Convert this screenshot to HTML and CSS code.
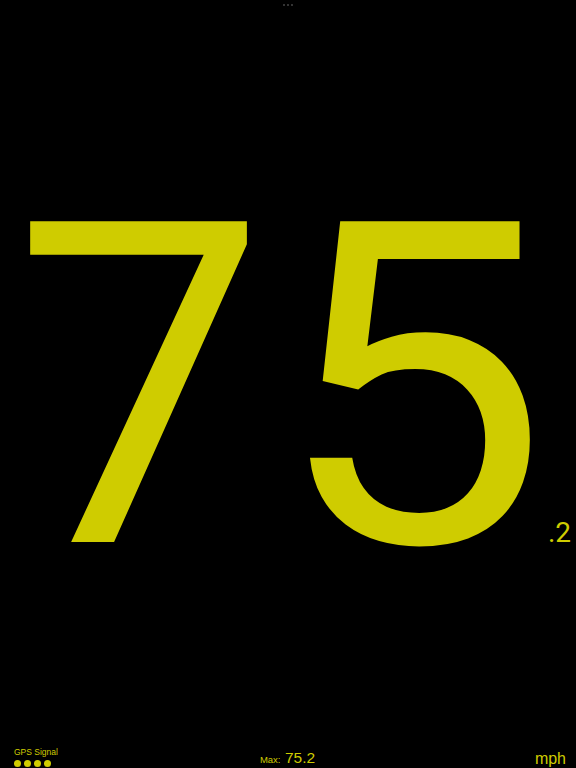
FILE: index.html
```html
<!DOCTYPE html>
<html>
<head>
<meta charset="utf-8">
<link rel="stylesheet" href="styles.css">
</head>
<body>
<div class="screen">
  <div class="grabber"><span></span><span></span><span></span></div>
  <div class="speed">
    <span class="whole"><span class="d7">7</span><span class="d5">5</span></span><span class="frac">.2</span>
  </div>
  <div class="bottom">
    <div class="gps">
      <div class="gps-label">GPS Signal</div>
      <div class="dots"><span></span><span></span><span></span><span></span></div>
    </div>
    <div class="max"><span class="max-label">Max:</span> <span class="max-val">75.2</span></div>
    <div class="unit">mph</div>
  </div>
</div>
</body>
</html>
```
FILE: styles.css
```css
html, body {
  margin: 0;
  padding: 0;
  background: #000;
}
.screen {
  width: 576px;
  height: 768px;
  display: flex;
  flex-direction: column;
  font-family: "Liberation Sans", Arial, sans-serif;
  color: #cfcc00;
  overflow: hidden;
}
.grabber {
  display: flex;
  justify-content: center;
  gap: 2px;
  padding-top: 4px;
  height: 4px;
}
.grabber span {
  width: 2px;
  height: 2px;
  border-radius: 50%;
  background: #444;
}
.speed {
  flex: 1;
  display: flex;
  align-items: baseline;
  justify-content: flex-start;
  padding-top: 155px;
  padding-left: 13px;
}
.whole {
  font-family: Roboto, "Liberation Sans", sans-serif;
  font-weight: 400;
  font-size: 451px;
  line-height: 1;
  white-space: nowrap;
}
.d7 {
  display: inline-block;
}
.d5 {
  display: inline-block;
  margin-left: 7px;
  transform: scaleX(1.09);
  transform-origin: 0 50%;
}
.frac {
  font-family: Roboto, "Liberation Sans", sans-serif;
  font-size: 28px;
  line-height: 1;
  margin-left: 21px;
}
.bottom {
  display: grid;
  grid-template-columns: 1fr auto 1fr;
  align-items: end;
  padding: 0 10px 0 14px;
  height: 30px;
}
.gps-label {
  font-size: 8.5px;
  line-height: 10px;
  margin-bottom: 1px;
}
.dots {
  display: flex;
  gap: 3px;
  margin-top: 3px;
  padding-bottom: 1px;
}
.dots span {
  width: 7px;
  height: 7px;
  border-radius: 50%;
  background: #cfcc00;
}
.max {
  line-height: 18px;
  margin-right: 5px;
  margin-bottom: -1px;
}
.max-label {
  font-size: 9.5px;
}
.max-val {
  font-size: 15.5px;
}
.unit {
  justify-self: end;
  font-size: 16px;
  line-height: 18px;
}
```
